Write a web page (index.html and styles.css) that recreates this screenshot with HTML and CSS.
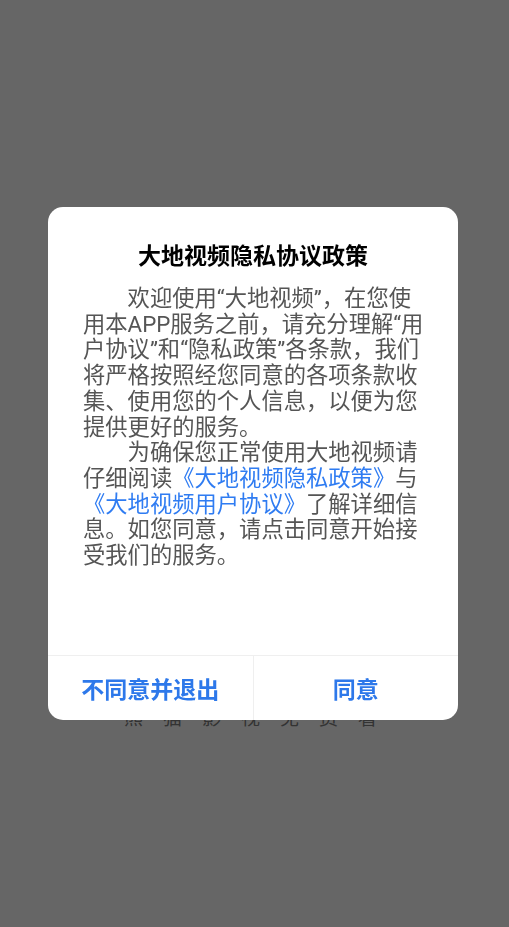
FILE: index.html
```html
<!DOCTYPE html>
<html lang="zh-CN">
<head>
<meta charset="utf-8">
<meta name="viewport" content="width=device-width, initial-scale=1">
<title>大地视频</title>
<link rel="stylesheet" href="styles.css">
</head>
<body>
<div class="splash">
  <div class="slogan">熊猫影视免费看</div>
</div>
<div class="overlay">
  <div class="dialog">
    <h1 class="title">大地视频隐私协议政策</h1>
    <div class="content">
      <p class="para">欢迎使用“大地视频”，在您使用本APP服务之前，请充分理解“用户协议”和“隐私政策”各条款，我们将严格按照经您同意的各项条款收集、使用您的个人信息，以便为您提供更好的服务。</p>
      <p class="para">为确保您正常使用大地视频请仔细阅读<a class="link" href="#">《大地视频隐私政策》</a>与<a class="link" href="#">《大地视频用户协议》</a>了解详细信息。如您同意，请点击同意开始接受我们的服务。</p>
    </div>
    <div class="actions">
      <button class="btn" type="button">不同意并退出</button>
      <button class="btn" type="button">同意</button>
    </div>
  </div>
</div>
</body>
</html>
```
FILE: styles.css
```css
* {
  box-sizing: border-box;
}

html, body {
  margin: 0;
  padding: 0;
  height: 100%;
}

body {
  background: #ffffff;
  font-family: Roboto, "Noto Sans CJK SC", sans-serif;
}

.splash {
  height: 100vh;
  display: flex;
  flex-direction: column;
  justify-content: flex-end;
  padding-bottom: 201px;
}

.slogan {
  font-family: "Noto Sans CJK SC", sans-serif;
  font-size: 19px;
  line-height: 19px;
  color: #808080;
  letter-spacing: 20px;
  text-align: center;
  padding-left: 12px;
}

.overlay {
  position: fixed;
  inset: 0;
  background: rgba(0, 0, 0, 0.6);
  display: flex;
  align-items: center;
  justify-content: center;
}

.dialog {
  width: 410px;
  height: 513px;
  margin-right: 3px;
  background: #ffffff;
  border-radius: 15px;
  display: flex;
  flex-direction: column;
  overflow: hidden;
}

.title {
  margin: 0;
  padding-top: 32px;
  font-family: "Noto Sans CJK SC", sans-serif;
  font-size: 23px;
  line-height: 30px;
  font-weight: 700;
  color: #000000;
  text-align: center;
}

.content {
  flex: 1;
  margin-top: 17px;
  padding: 0 33px 0 35px;
}

.para {
  margin: 0;
  font-size: 22.3px;
  line-height: 25.7px;
  color: #555555;
  text-indent: 2em;
}

.link {
  color: #2f7cf2;
  text-decoration: none;
}

.actions {
  display: flex;
  height: 65px;
  border-top: 1px solid #efefef;
}

.btn {
  flex: 1;
  border: 0;
  margin: 0;
  padding: 0;
  background: transparent;
  font-family: "Noto Sans CJK SC", sans-serif;
  font-size: 23px;
  font-weight: 700;
  color: #2d78ea;
}

.btn + .btn {
  border-left: 1px solid #efefef;
}
```
